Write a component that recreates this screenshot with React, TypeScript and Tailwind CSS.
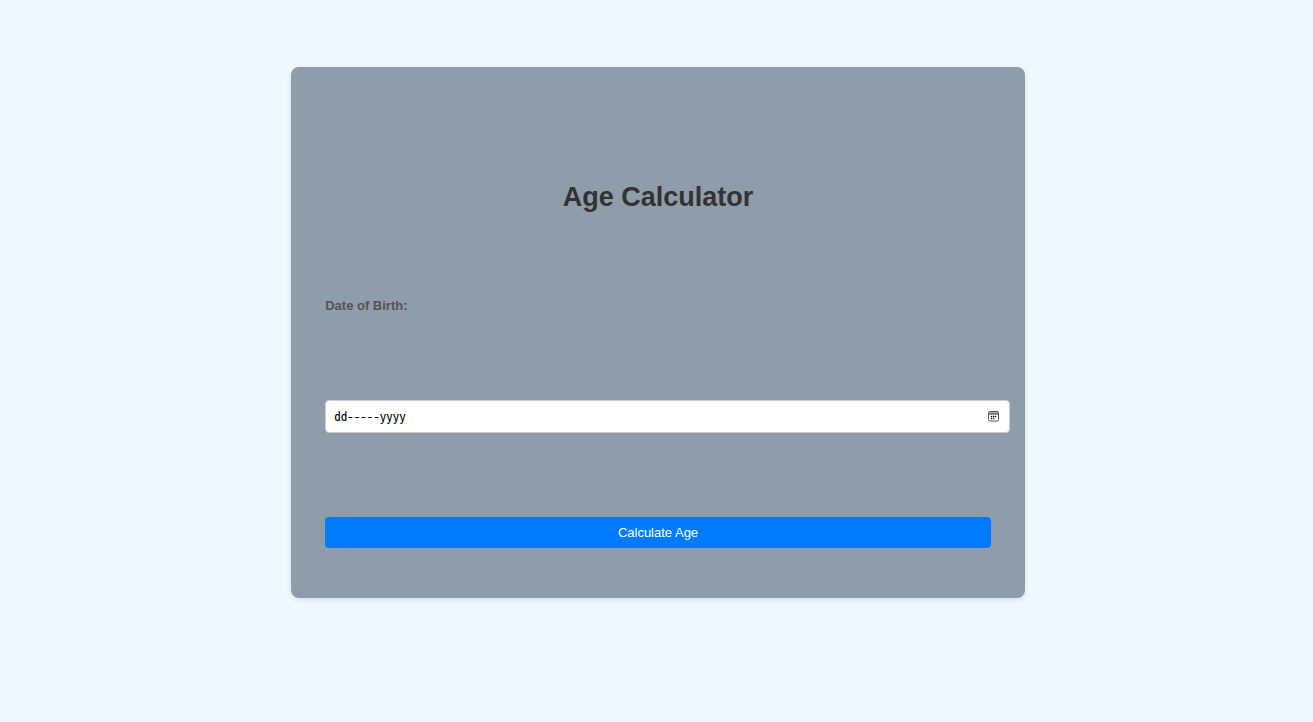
import { useState } from "react";
import type { FormEvent } from "react";

function CalendarIcon() {
  return (
    <svg width="11" height="11" viewBox="0 0 11 11" aria-hidden="true">
      <rect x="0.5" y="0.5" width="10" height="9.5" rx="1.5" fill="none" stroke="#555" />
      <path d="M1 1h9v1.5H1z" fill="#aaa" />
      <path d="M1 3H10" stroke="#222" />
      <path d="M5 5h1v1H5zM7 5h1v1H7zM3 7h1v1H3zM5 7h1v1H5zM3 5h1v1H3z" fill="#000" stroke="#000" strokeWidth="0.3" />
    </svg>
  );
}

function ageFrom(text: string): string {
  const born = new Date(text);
  if (Number.isNaN(born.getTime())) return "";
  const now = new Date();
  let years = now.getFullYear() - born.getFullYear();
  const beforeBirthday =
    now.getMonth() < born.getMonth() ||
    (now.getMonth() === born.getMonth() && now.getDate() < born.getDate());
  if (beforeBirthday) years -= 1;
  return `${years} years`;
}

export default function App() {
  const [birth, setBirth] = useState("");
  const [age, setAge] = useState("");

  const submit = (event: FormEvent) => {
    event.preventDefault();
    setAge(ageFrom(birth));
  };

  return (
    <main className="min-h-screen bg-[#f0f8ff] pt-[67px] pb-16 pl-[3px] font-['Liberation_Sans',Arial,sans-serif]">
      <section className="mx-auto w-14/25 rounded-lg bg-[#8f9ca9] px-[34px] pt-[114px] pb-[50px] shadow-[0_2px_5px_rgba(0,0,0,0.1)]">
        <h1 className="text-center text-[27px] leading-8 font-bold text-[#333]">Age Calculator</h1>
        <form onSubmit={submit} className="mt-[85px] flex flex-col">
          <label htmlFor="birth" className="text-[13px] leading-4 font-bold text-[#555]">
            Date of Birth:
          </label>
          <div className="mt-[86px] -mr-[19px] flex h-[33px] items-center rounded-[4px] border border-[#ccc] bg-white pr-2.5 pl-2">
            <input
              id="birth"
              type="text"
              value={birth}
              onChange={(event) => setBirth(event.target.value)}
              placeholder="dd-----yyyy"
              className="min-w-0 flex-1 pb-0.5 font-['Noto_Sans_Mono_CJK_JP','Liberation_Mono',monospace] text-[13px] leading-4 text-black outline-none placeholder:text-black"
            />
            <button type="button" aria-label="Open calendar">
              <CalendarIcon />
            </button>
          </div>
          <button
            type="submit"
            className="mt-[84px] h-[31px] rounded-[4px] bg-[#007bff] text-[13px] text-white"
          >
            Calculate Age
          </button>
        </form>
        {age && <output className="mt-4 block text-center text-[#333]">{age}</output>}
      </section>
    </main>
  );
}
